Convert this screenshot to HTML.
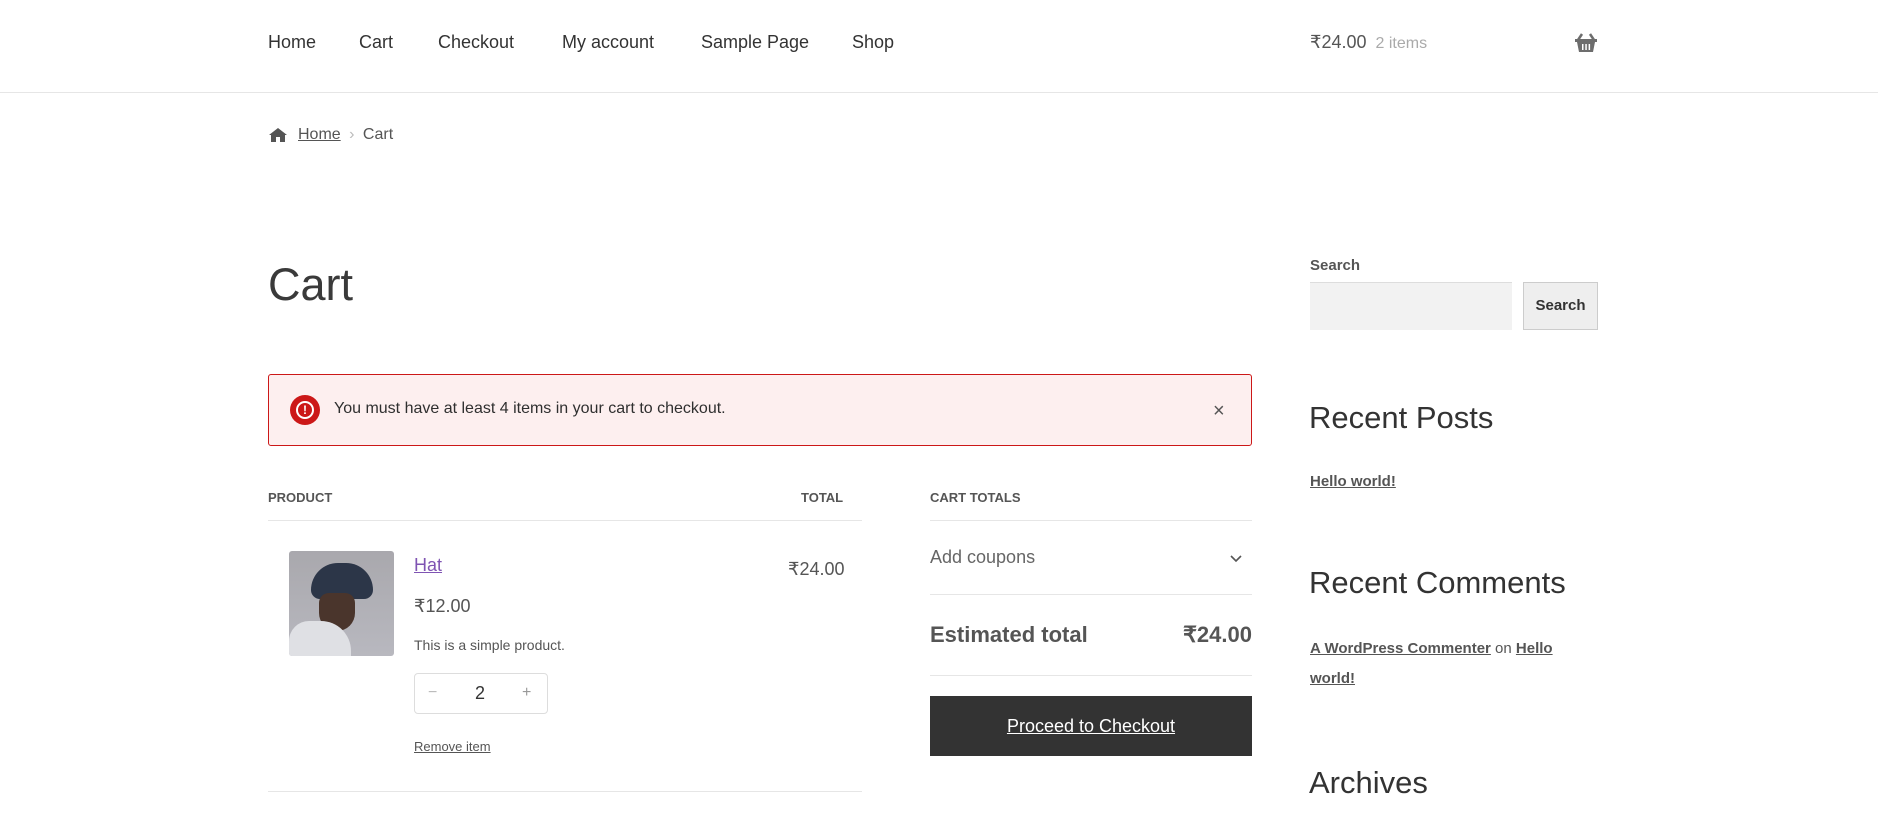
<!DOCTYPE html>
<html><head><meta charset="utf-8"><style>
*{margin:0;padding:0;box-sizing:border-box}
body{width:1878px;height:824px;overflow:hidden;background:#fff;font-family:"Liberation Sans",sans-serif;color:#404040;position:relative}
.a{position:absolute;white-space:nowrap}
.nav{top:32px;font-size:18px;color:#333}
.hr{position:absolute;height:1px;background:#e6e6e6}
u{text-decoration:underline}
</style></head><body>
<div class="a nav" style="left:268px">Home</div>
<div class="a nav" style="left:359px">Cart</div>
<div class="a nav" style="left:438px">Checkout</div>
<div class="a nav" style="left:562px">My account</div>
<div class="a nav" style="left:701px">Sample Page</div>
<div class="a nav" style="left:852px">Shop</div>
<div class="a" style="left:1310px;top:32px;font-size:18px;color:#555">₹24.00 <span style="color:#aaa;font-size:16px;margin-left:4px">2 items</span></div>
<svg class="a" style="left:1575px;top:33px" width="22" height="19" viewBox="0 0 22 19"><path d="M7 1 L3 7 M15 1 L19 7" stroke="#6d6d6d" stroke-width="2.5"/><rect x="0" y="6" width="22" height="3" fill="#6d6d6d"/><path d="M2 9 L20 9 L18 19 L4 19Z" fill="#6d6d6d"/><rect x="7" y="11" width="1.5" height="6" fill="#fff"/><rect x="10.3" y="11" width="1.5" height="6" fill="#fff"/><rect x="13.6" y="11" width="1.5" height="6" fill="#fff"/></svg>
<div class="hr" style="left:0;top:92px;width:1878px"></div>
<svg class="a" style="left:268px;top:127px" width="20" height="16" viewBox="0 0 20 16"><path d="M10 1 L1 8 L3 8 L3 15 L8 15 L8 10 L12 10 L12 15 L17 15 L17 8 L19 8Z" fill="#555"/></svg>
<div class="a" style="left:298px;top:126px;font-size:16px;color:#555"><u>Home</u> <span style="color:#bbb;margin:0 4px">›</span> Cart</div>
<div class="a" style="left:268px;top:259px;font-size:45px;font-weight:300;color:#3a3a3a">Cart</div>
<div class="a" style="left:268px;top:374px;width:984px;height:72px;background:#fdefef;border:1px solid #cc1818;border-radius:3px"></div>
<div class="a" style="left:290px;top:395px;width:30px;height:30px;border-radius:50%;background:#cc1818"></div>
<div class="a" style="left:296px;top:401px;width:18px;height:18px;border-radius:50%;border:2px solid #fff;color:#fff;font-size:12px;font-weight:bold;text-align:center;line-height:14px">!</div>
<div class="a" style="left:334px;top:400px;font-size:16px;color:#2f2f2f">You must have at least 4 items in your cart to checkout.</div>
<div class="a" style="left:1213px;top:400px;font-size:20px;color:#555;font-weight:300">×</div>
<div class="a" style="left:268px;top:490px;font-size:13px;font-weight:bold;color:#555">PRODUCT</div>
<div class="a" style="left:801px;top:490px;font-size:13px;font-weight:bold;color:#555">TOTAL</div>
<div class="hr" style="left:268px;top:520px;width:594px"></div>
<div class="a" style="left:289px;top:551px;width:105px;height:105px;border-radius:3px;background:linear-gradient(#a9a8ad,#b8b8bf);overflow:hidden">
<div class="a" style="left:22px;top:12px;width:62px;height:36px;border-radius:30px 30px 10px 10px;background:#2c3648"></div>
<div class="a" style="left:30px;top:42px;width:36px;height:38px;border-radius:10px 10px 18px 18px;background:#4a352c"></div>
<div class="a" style="left:0;top:70px;width:62px;height:40px;border-radius:20px 30px 0 0;background:#dfe0e4"></div>
</div>
<div class="a" style="left:414px;top:555px;font-size:18px;color:#7f54b3"><u>Hat</u></div>
<div class="a" style="left:414px;top:596px;font-size:18px;color:#555">₹12.00</div>
<div class="a" style="left:414px;top:637px;font-size:14px;color:#555">This is a simple product.</div>
<div class="a" style="left:414px;top:673px;width:134px;height:41px;border:1px solid #ddd;border-radius:4px"></div>
<div class="a" style="left:428px;top:684px;font-size:16px;color:#bbb">−</div>
<div class="a" style="left:475px;top:683px;font-size:18px;color:#333">2</div>
<div class="a" style="left:522px;top:684px;font-size:16px;color:#999">+</div>
<div class="a" style="left:414px;top:739px;font-size:13px;color:#555"><u>Remove item</u></div>
<div class="a" style="left:788px;top:559px;font-size:18px;color:#555">₹24.00</div>
<div class="hr" style="left:268px;top:791px;width:594px"></div>
<div class="a" style="left:930px;top:490px;font-size:13px;font-weight:bold;color:#555">CART TOTALS</div>
<div class="hr" style="left:930px;top:520px;width:322px"></div>
<div class="a" style="left:930px;top:547px;font-size:18px;color:#666">Add coupons</div>
<svg class="a" style="left:1229px;top:553px" width="14" height="10" viewBox="0 0 14 10"><path d="M2 3 L7 8 L12 3" stroke="#555" stroke-width="1.6" fill="none"/></svg>
<div class="hr" style="left:930px;top:594px;width:322px"></div>
<div class="a" style="left:930px;top:622px;font-size:22px;font-weight:bold;color:#555">Estimated total</div>
<div class="a" style="left:1252px;top:622px;font-size:22px;font-weight:bold;color:#555;transform:translateX(-100%)">₹24.00</div>
<div class="hr" style="left:930px;top:675px;width:322px"></div>
<div class="a" style="left:930px;top:696px;width:322px;height:60px;background:#333;color:#fff;font-size:18px;text-align:center;line-height:60px"><u>Proceed to Checkout</u></div>
<div class="a" style="left:1310px;top:257px;font-size:15px;font-weight:bold;color:#555">Search</div>
<div class="a" style="left:1310px;top:282px;width:202px;height:48px;background:#f2f2f2;border-top:1px solid #ddd"></div>
<div class="a" style="left:1523px;top:282px;width:75px;height:48px;background:#eee;border:1px solid #ccc;font-size:15px;font-weight:bold;color:#333;text-align:center;line-height:46px">Search</div>
<div class="a" style="left:1309px;top:400px;font-size:31px;font-weight:300;color:#333">Recent Posts</div>
<div class="a" style="left:1310px;top:473px;font-size:15px;font-weight:bold;color:#555"><u>Hello world!</u></div>
<div class="a" style="left:1309px;top:565px;font-size:31px;font-weight:300;color:#333">Recent Comments</div>
<div class="a" style="left:1310px;top:640px;font-size:15px;color:#555"><b><u>A WordPress Commenter</u></b> on <b><u>Hello</u></b></div>
<div class="a" style="left:1310px;top:670px;font-size:15px;font-weight:bold;color:#555"><u>world!</u></div>
<div class="a" style="left:1309px;top:765px;font-size:31px;font-weight:300;color:#333">Archives</div>
</body></html>
